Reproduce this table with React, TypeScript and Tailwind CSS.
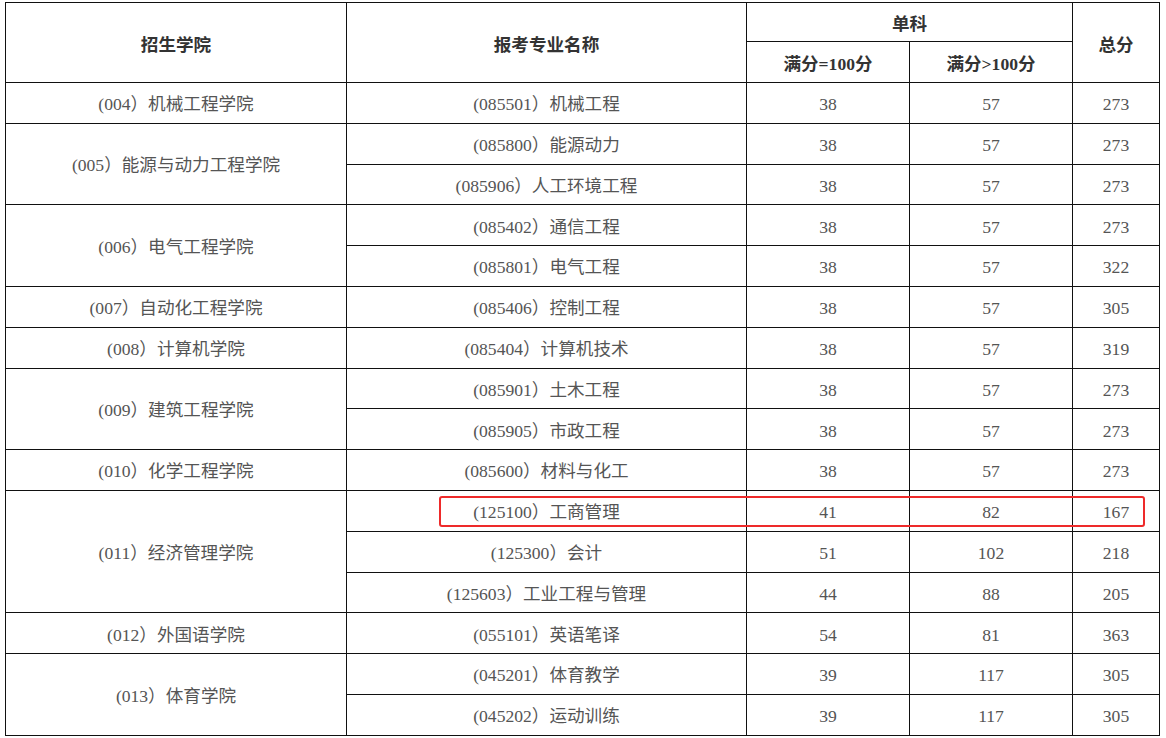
const rows: { college: string; span: number; items: [string, string, string, string][] }[] = [
  { college: '(004）机械工程学院', span: 1, items: [['(085501）机械工程', '38', '57', '273']] },
  {
    college: '(005）能源与动力工程学院',
    span: 2,
    items: [
      ['(085800）能源动力', '38', '57', '273'],
      ['(085906）人工环境工程', '38', '57', '273'],
    ],
  },
  {
    college: '(006）电气工程学院',
    span: 2,
    items: [
      ['(085402）通信工程', '38', '57', '273'],
      ['(085801）电气工程', '38', '57', '322'],
    ],
  },
  { college: '(007）自动化工程学院', span: 1, items: [['(085406）控制工程', '38', '57', '305']] },
  { college: '(008）计算机学院', span: 1, items: [['(085404）计算机技术', '38', '57', '319']] },
  {
    college: '(009）建筑工程学院',
    span: 2,
    items: [
      ['(085901）土木工程', '38', '57', '273'],
      ['(085905）市政工程', '38', '57', '273'],
    ],
  },
  { college: '(010）化学工程学院', span: 1, items: [['(085600）材料与化工', '38', '57', '273']] },
  {
    college: '(011）经济管理学院',
    span: 3,
    items: [
      ['(125100）工商管理', '41', '82', '167'],
      ['(125300）会计', '51', '102', '218'],
      ['(125603）工业工程与管理', '44', '88', '205'],
    ],
  },
  { college: '(012）外国语学院', span: 1, items: [['(055101）英语笔译', '54', '81', '363']] },
  {
    college: '(013）体育学院',
    span: 2,
    items: [
      ['(045201）体育教学', '39', '117', '305'],
      ['(045202）运动训练', '39', '117', '305'],
    ],
  },
];

const cell = 'border border-[#111] text-center align-middle p-0 pt-[3px]';

export default function App() {
  return (
    <div
      className="relative w-[1166px] h-[738px] bg-white overflow-hidden pt-[2px] pl-[5px]"
      style={{ fontFamily: '"Liberation Serif", "Noto Sans CJK SC", serif' }}
    >
      <table className="border-collapse table-fixed w-[1154px] text-[17.6px] text-[#555]">
        <colgroup>
          <col className="w-[341px]" />
          <col className="w-[400px]" />
          <col className="w-[163px]" />
          <col className="w-[163px]" />
          <col className="w-[87px]" />
        </colgroup>
        <thead className="font-black text-[#333]" style={{ fontFamily: '"Noto Sans CJK SC", sans-serif' }}>
          <tr className="h-[39px]">
            <th rowSpan={2} className={cell}>招生学院</th>
            <th rowSpan={2} className={cell}>报考专业名称</th>
            <th colSpan={2} className={cell}>单科</th>
            <th rowSpan={2} className={cell}>总分</th>
          </tr>
          <tr className="h-[41px]">
            <th className={cell}>
              满分<span className="font-bold" style={{ fontFamily: '"Liberation Serif", serif' }}>=100</span>分
            </th>
            <th className={cell}>
              满分<span className="font-bold" style={{ fontFamily: '"Liberation Serif", serif' }}>&gt;100</span>分
            </th>
          </tr>
        </thead>
        <tbody>
          {rows.map((g) =>
            g.items.map((it, i) => (
              <tr key={it[0]} className="h-[40.8px]">
                {i === 0 && (
                  <td rowSpan={g.span} className={cell}>
                    {g.college}
                  </td>
                )}
                <td className={cell}>{it[0]}</td>
                <td className={cell}>{it[1]}</td>
                <td className={cell}>{it[2]}</td>
                <td className={cell}>{it[3]}</td>
              </tr>
            ))
          )}
        </tbody>
      </table>
      <div className="absolute left-[439px] top-[496px] w-[706px] h-[31px] border-2 border-[#ee2a2a] rounded-[3px]" />
    </div>
  );
}
